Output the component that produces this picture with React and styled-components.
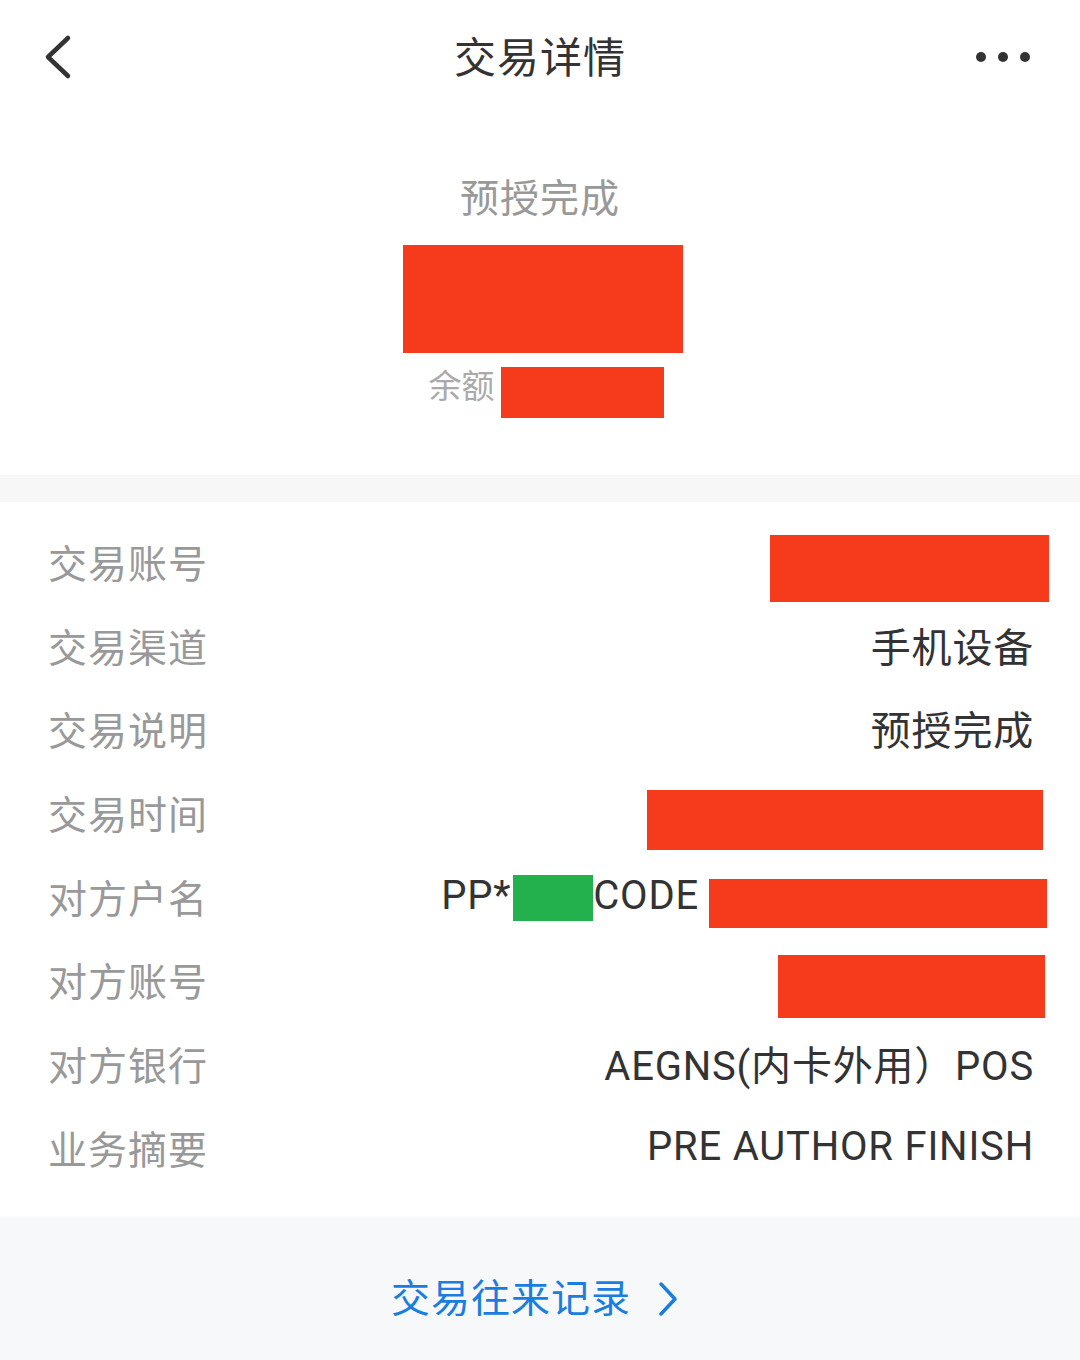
import React from "react";
import styled, { createGlobalStyle } from "styled-components";

const Global = createGlobalStyle`
  html, body { margin: 0; padding: 0; background: #ffffff; }
  body { font-family: Roboto, "Noto Sans CJK SC", sans-serif; }
`;

const RED = "#f63b1d";

const Page = styled.div`
  width: 1080px;
  min-height: 1360px;
  display: flex;
  flex-direction: column;
  background: #ffffff;
`;

const Header = styled.header`
  height: 114px;
  display: grid;
  grid-template-columns: 120px 1fr 120px;
  align-items: center;
`;

const BackBtn = styled.div`
  display: flex;
  align-items: center;
  padding-left: 42px;
`;

const Title = styled.h1`
  margin: 0 0 5px;
  text-align: center;
  font-size: 42px;
  font-weight: 400;
  color: #333333;
  letter-spacing: 1px;
`;

const MoreBtn = styled.div`
  display: flex;
  justify-content: flex-end;
  align-items: center;
  gap: 12px;
  padding-right: 50px;
`;

const Dot = styled.span`
  width: 10px;
  height: 10px;
  border-radius: 50%;
  background: #333333;
`;

const Summary = styled.section`
  display: flex;
  flex-direction: column;
  align-items: center;
  padding: 60px 0 57px;
`;

const Status = styled.div`
  font-size: 39px;
  line-height: 50px;
  color: #999999;
  letter-spacing: 1px;
`;

const Redact = styled.span`
  display: inline-block;
  flex: none;
  width: ${(p) => p.$w}px;
  height: ${(p) => p.$h}px;
  background: ${(p) => p.$color || RED};
  margin-right: ${(p) => p.$mr || 0}px;
  margin-left: ${(p) => p.$ml || 0}px;
  margin-top: ${(p) => (p.$dy || 0) * 2}px;
`;

const Amount = styled(Redact)`
  margin-top: 21px;
`;

const BalanceRow = styled.div`
  margin-top: 14px;
  margin-left: 12px;
  display: flex;
  align-items: flex-start;
  gap: 6px;
`;

const BalanceLabel = styled.span`
  font-size: 33px;
  line-height: 40px;
  color: #aaaaaa;
`;

const Divider = styled.div`
  height: 27px;
  background: #f7f7f7;
`;

const Details = styled.section`
  padding: 17px 46px 28px 48px;
  display: flex;
  flex-direction: column;
`;

const Row = styled.div`
  height: 83.7px;
  display: flex;
  align-items: center;
  justify-content: space-between;
`;

const Label = styled.span`
  font-size: 39px;
  color: #999999;
  letter-spacing: 1px;
`;

const Value = styled.span`
  display: flex;
  align-items: center;
  font-size: 40px;
  color: #333333;
  letter-spacing: 0.8px;
`;

const Footer = styled.footer`
  flex: 1;
  background: #f7f8fa;
  display: flex;
  justify-content: center;
  align-items: flex-start;
  padding-top: 57px;
`;

const Link = styled.a`
  display: flex;
  align-items: center;
  gap: 26px;
  font-size: 39px;
  line-height: 50px;
  color: #1a7de0;
  text-decoration: none;
  letter-spacing: 1px;
  margin-right: 10px;
`;

const rows = [
  { label: "交易账号", value: <Redact $w={279} $h={67} $mr={-15} $dy={8} /> },
  { label: "交易渠道", value: "手机设备" },
  { label: "交易说明", value: "预授完成" },
  { label: "交易时间", value: <Redact $w={396} $h={60} $mr={-9} $dy={8} /> },
  {
    label: "对方户名",
    value: (
      <>
        PP*
        <Redact $w={80} $h={46} $color="#22b14c" $ml={2} $dy={2} />
        CODE
        <Redact $w={338} $h={49} $ml={10} $mr={-13} $dy={8} />
      </>
    ),
  },
  { label: "对方账号", value: <Redact $w={267} $h={63} $mr={-11} $dy={7} /> },
  { label: "对方银行", value: "AEGNS(内卡外用）POS" },
  { label: "业务摘要", value: "PRE AUTHOR FINISH" },
];

export default function App() {
  return (
    <Page>
      <Global />
      <Header>
        <BackBtn>
          <svg width="32" height="46" viewBox="0 0 32 46">
            <path d="M26 4 L6 23 L26 42" fill="none" stroke="#333" strokeWidth="4.5" strokeLinecap="round" strokeLinejoin="round" />
          </svg>
        </BackBtn>
        <Title>交易详情</Title>
        <MoreBtn>
          <Dot />
          <Dot />
          <Dot />
        </MoreBtn>
      </Header>
      <Summary>
        <Status>预授完成</Status>
        <Amount $w={280} $h={108} $ml={6} />
        <BalanceRow>
          <BalanceLabel>余额</BalanceLabel>
          <Redact $w={163} $h={51} />
        </BalanceRow>
      </Summary>
      <Divider />
      <Details>
        {rows.map((r) => (
          <Row key={r.label}>
            <Label>{r.label}</Label>
            <Value>{r.value}</Value>
          </Row>
        ))}
      </Details>
      <Footer>
        <Link href="#">
          交易往来记录
          <svg width="22" height="36" viewBox="0 0 22 36">
            <path d="M4 3 L18 18 L4 33" fill="none" stroke="#1a7de0" strokeWidth="3.5" strokeLinecap="round" strokeLinejoin="round" />
          </svg>
        </Link>
      </Footer>
    </Page>
  );
}
